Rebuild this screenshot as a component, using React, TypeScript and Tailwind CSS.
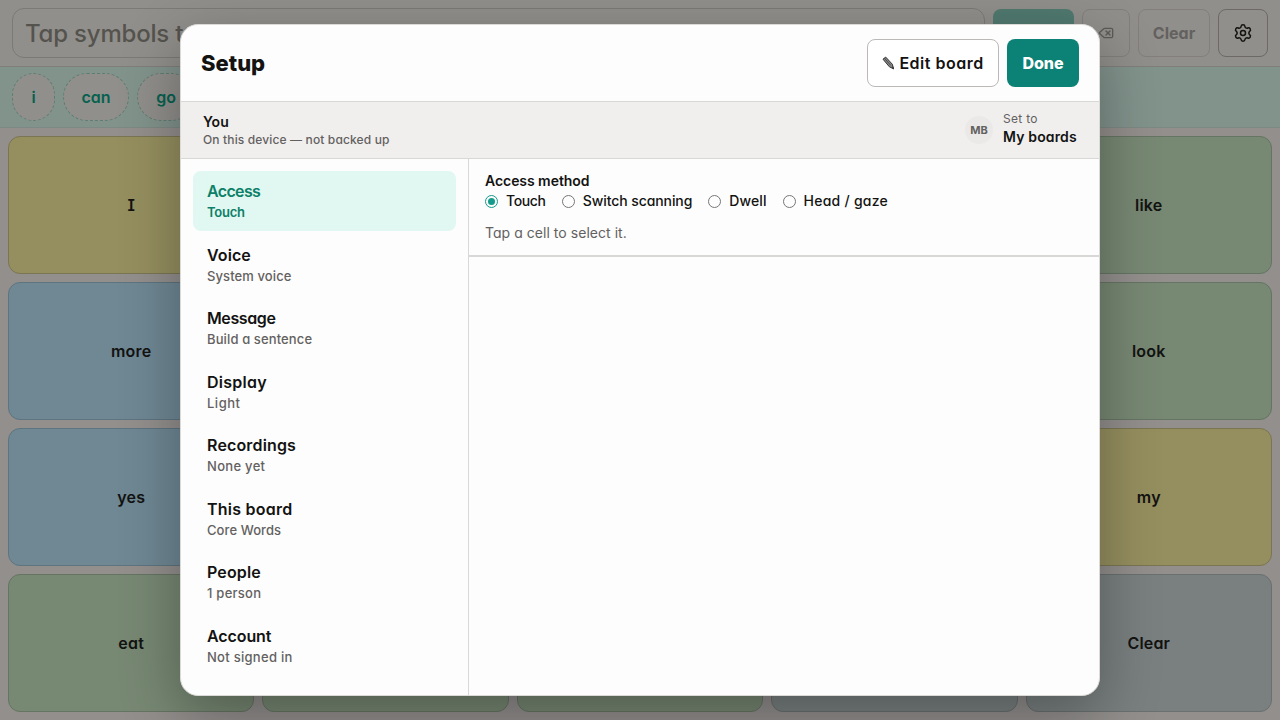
import { Settings, Delete } from "lucide-react";

const cells = [
  ["I", "y"], ["", "y"], ["", "b"], ["", "b"], ["like", "g"],
  ["more", "b"], ["", "g"], ["", "g"], ["", "g"], ["look", "g"],
  ["yes", "b"], ["", "b"], ["", "b"], ["", "y"], ["my", "y"],
  ["eat", "g"], ["", "g"], ["", "g"], ["", "s"], ["Clear", "s"],
];
const tone: Record<string, string> = {
  y: "bg-[#958f5f] border-[#7a7553]",
  b: "bg-[#6f8894] border-[#5e747f]",
  g: "bg-[#778873] border-[#667463]",
  s: "bg-[#7a8080] border-[#6a6f70]",
};
const sections = [
  ["Access", "Touch", "tracking-[-0.65px]", "tracking-[-0.25px]"],
  ["Voice", "System voice", "tracking-[0.1px]", "tracking-[0.1px]"],
  ["Message", "Build a sentence", "tracking-[-0.4px]", "tracking-[0.12px]"],
  ["Display", "Light", "tracking-[0.25px]", "tracking-[0.5px]"],
  ["Recordings", "None yet", "tracking-[0.15px]", "tracking-[0.3px]"],
  ["This board", "Core Words", "tracking-[0.25px]", "tracking-[0.08px]"],
  ["People", "1 person", "tracking-[0.15px]", "tracking-[0.25px]"],
  ["Account", "Not signed in", "tracking-[-0.1px]", "tracking-[0.28px]"],
];
const methods = [
  ["Touch", "tracking-[-0.35px]"],
  ["Switch scanning", "tracking-[-0.08px]"],
  ["Dwell", "tracking-[0.1px]"],
  ["Head / gaze", "tracking-[0.25px]"],
];

function Pencil() {
  return (
    <svg width="13" height="14" viewBox="0 0 13 14" fill="none">
      <path d="M1 3.2 3.7 1.1 10.3 8.2 11.6 12.8 7.4 10.8Z" fill="#888" stroke="#333" strokeWidth="1" strokeLinejoin="round" />
      <path d="M2.4 2.2 8.8 9.4M9.9 11.6 11.6 12.8 11 10.8Z" stroke="#333" strokeWidth="0.7" />
    </svg>
  );
}

export default function App() {
  return (
    <div className="relative flex h-[720px] w-[1280px] flex-col overflow-hidden bg-[#928f8d] text-[#131312] [font-family:Inter,sans-serif] [font-feature-settings:'cv11']">
      <header className="flex h-[67px] shrink-0 items-center gap-2 border-b border-[#807e7b] bg-[#918f8b] px-3">
        <div className="flex h-[50px] w-[973px] items-center rounded-xl border border-[#7c7a77] pt-0.5 pl-3 text-2xl font-medium tracking-[-0.2px] whitespace-nowrap text-[#55534e]">Tap symbols to speak</div>
        <div className="h-12 w-[81px] rounded-lg bg-[#50796f]" />
        <div className="flex h-12 w-12 items-center justify-center rounded-lg border border-[#827f7c] text-[#5d5b59]"><Delete size={16} /></div>
        <div className="flex h-12 w-[72px] items-center justify-center rounded-lg border border-[#827f7c] font-bold text-[#636160]">Clear</div>
        <div className="flex h-12 w-[50px] items-center justify-center rounded-lg border border-[#6c6967]"><Settings size={20} strokeWidth={1.8} /></div>
      </header>
      <div className="flex h-[61px] shrink-0 items-center gap-2 border-b border-[#7d8984] bg-[#82938c] px-3 font-semibold text-[#06614f]">
        <div className="flex h-12 w-[43px] items-center justify-center rounded-full border border-dashed border-[#5c7f74] bg-[#918f8c]">i</div>
        <div className="flex h-12 w-[66px] items-center justify-center rounded-full border border-dashed border-[#5c7f74] bg-[#918f8c]">can</div>
        <div className="flex h-12 w-[58px] items-center justify-center rounded-full border border-dashed border-[#5c7f74] bg-[#918f8c]">go</div>
      </div>
      <main className="grid flex-1 grid-cols-5 grid-rows-4 gap-2 p-2">
        {cells.map(([t, c], i) => (
          <div key={i} className={`flex items-center justify-center rounded-xl border font-semibold tracking-[0.2px] [font-feature-settings:'cv08','cv11'] ${tone[c]}`}>{t}</div>
        ))}
      </main>
      <div className="absolute top-6 left-[180px] flex h-[672px] w-[920px] flex-col overflow-hidden rounded-[18px] border border-[#dcdad8] bg-[#fdfdfd] shadow-[0_20px_60px_rgba(0,0,0,0.32)]">
        <div className="flex h-[77px] shrink-0 items-center gap-2 border-b border-[#d8d8d7] px-5">
          <h1 className="flex-1 text-[22px] font-extrabold">Setup</h1>
          <button className="flex h-12 w-[132px] items-center justify-center gap-1 rounded-lg border border-[#bab9b8] bg-white font-semibold tracking-[0.5px] whitespace-nowrap">
            <Pencil />Edit board
          </button>
          <button className="h-12 w-[72px] rounded-lg bg-[#0c8175] font-extrabold text-white">Done</button>
        </div>
        <div className="flex h-[57px] shrink-0 items-center border-b border-[#d8d8d7] bg-[#f0efee] px-[22px]">
          <div className="flex-1 pt-0.5">
            <div className="text-sm leading-[18px] font-semibold">You</div>
            <div className="text-xs leading-[18px] font-medium tracking-[0.14px] text-[#63615f]">On this device — not backed up</div>
          </div>
          <div className="mr-[10px] flex h-7 w-7 items-center justify-center rounded-full bg-[#eae9e8] text-[11px] font-bold text-[#63615f]">MB</div>
          <div className="w-[74px] pb-1 whitespace-nowrap">
            <div className="text-xs leading-[18px] tracking-[0.3px] text-[#63615f]">Set to</div>
            <div className="text-sm leading-[18px] font-semibold tracking-[0.15px]">My boards</div>
          </div>
        </div>
        <div className="flex min-h-0 flex-1">
          <nav className="flex w-[288px] flex-col gap-[3.5px] border-r border-[#d8d8d7] p-3">
            {sections.map(([a, b, ta, tb], i) => (
              <div key={a} className={`flex h-[60px] shrink-0 flex-col justify-center rounded-lg px-[14px] ${i === 0 ? "bg-[#e0f8f1] text-[#0c8068]" : ""}`}>
                <div className={`text-base leading-[22px] font-semibold ${ta}`}>{a}</div>
                <div className={`text-[13px] leading-5 ${tb} ${i === 0 ? "font-semibold" : "font-medium text-[#63615f]"}`}>{b}</div>
              </div>
            ))}
          </nav>
          <section className="flex-1">
            <div className="h-[98px] border-b-2 border-[#d8d8d7] px-4 pt-3">
              <h2 className="text-sm leading-5 font-semibold tracking-[-0.05px]">Access method</h2>
              <div className="flex h-5 items-center gap-4 text-sm font-medium">
                {methods.map(([m, t], i) => (
                  <label key={m} className={`flex items-center gap-2 whitespace-nowrap ${t}`}>
                    <span className={`flex h-[13px] w-[13px] items-center justify-center rounded-full border ${i === 0 ? "border-[#159b8b]" : "border-[#767676]"}`}>
                      {i === 0 && <span className="h-[7px] w-[7px] rounded-full bg-[#159b8b]" />}
                    </span>
                    {m}
                  </label>
                ))}
              </div>
              <p className="mt-3 text-sm tracking-[0.04px] text-[#63615f]">Tap a cell to select it.</p>
            </div>
          </section>
        </div>
      </div>
    </div>
  );
}
